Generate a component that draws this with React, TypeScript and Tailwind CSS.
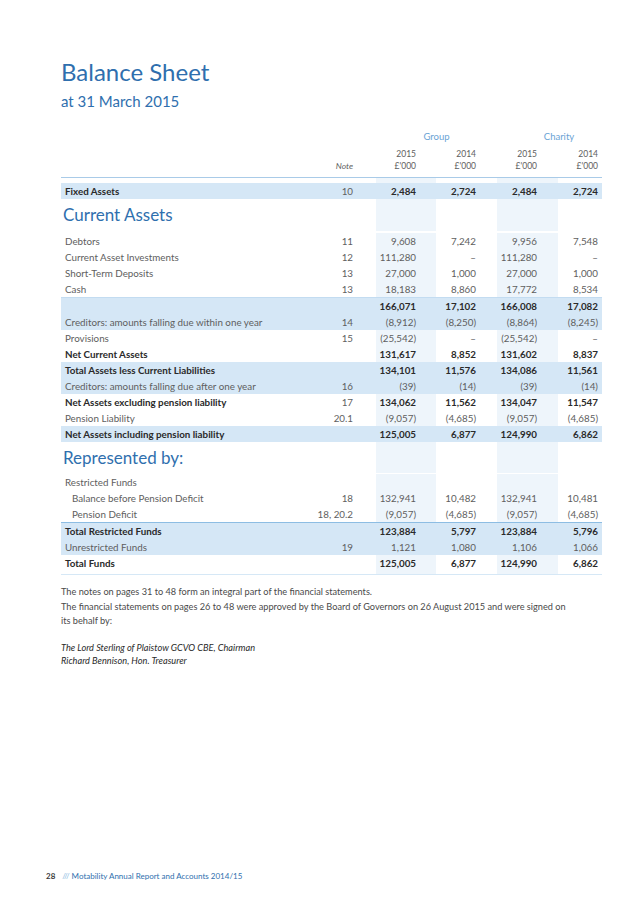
import type { ReactNode } from 'react';

const COLS = 'grid grid-cols-[255px_60px_60px_61px_61px_44px]';

interface RowProps {
  label?: ReactNode;
  note?: string;
  vals?: string[];
  bold?: boolean;
  shaded?: boolean;
  indent?: boolean;
  className?: string;
}

// one line of the statement; col 1 and 3 carry the pale column tint unless the whole row is shaded
function Row({ label, note, vals = ['', '', '', ''], bold, shaded, indent, className = 'h-4 leading-4' }: RowProps) {
  const tint = shaded ? '' : 'bg-[#eef5fb]';
  const val = bold ? 'font-bold text-[#2a2a2a]' : 'text-[#5e5e5e]';
  return (
    <div className={`${COLS} text-[9.8px] ${className} ${shaded ? 'bg-[#d5e7f6]' : ''}`}>
      <div className={`${indent ? 'pl-[11px]' : 'pl-1'} ${val} whitespace-nowrap`}>{label}</div>
      <div className="pr-[23px] text-right text-[#5e5e5e]">{note}</div>
      <div className={`pr-[20px] text-right ${tint} ${val}`}>{vals[0]}</div>
      <div className={`pr-[21px] text-right ${val}`}>{vals[1]}</div>
      <div className={`pr-[21px] text-right ${tint} ${val}`}>{vals[2]}</div>
      <div className={`pr-[4px] text-right ${val}`}>{vals[3]}</div>
    </div>
  );
}

function Heading({ children, className }: { children: ReactNode; className: string }) {
  return (
    <div className={`${COLS} ${className}`}>
      <div className="col-span-2 flex items-center pl-[2px] text-[17px] text-[#2f6fae]">{children}</div>
      <div className="bg-[#eef5fb]" />
      <div />
      <div className="bg-[#eef5fb]" />
      <div />
    </div>
  );
}

function Spacer({ className }: { className: string }) {
  return (
    <div className={`${COLS} ${className}`}>
      <div />
      <div />
      <div className="bg-[#eef5fb]" />
      <div />
      <div className="bg-[#eef5fb]" />
      <div />
    </div>
  );
}

export default function App() {
  return (
    <div className="h-[903px] w-[638px] bg-white font-['Lato','Liberation_Sans',sans-serif] text-[#5e5e5e]">
      <div className="pt-[58px] pl-[61px]">
        <h1 className="text-[24px] leading-[28px] text-[#2f6fae]">Balance Sheet</h1>
        <p className="mt-[5px] text-[15px] leading-[20px] text-[#2f6fae]">at 31 March 2015</p>
      </div>

      <div className="mt-[19px] ml-[61px] w-[541px]">
        {/* column headings */}
        <div className={`${COLS} text-[9.5px] leading-[14px] text-[#6aa3d5]`}>
          <div />
          <div />
          <div className="col-span-2 text-center">Group</div>
          <div className="col-span-2 pl-[19px] text-center">Charity</div>
        </div>
        <div className={`${COLS} mt-[4px] border-b border-[#a9cbe8] pb-[5px] text-[8.5px] leading-[12px] text-[#5e5e5e]`}>
          <div />
          <div className="flex items-end justify-end pr-[23px] italic">Note</div>
          <div className="pr-[20px] text-right">2015<br />£'000</div>
          <div className="pr-[21px] text-right">2014<br />£'000</div>
          <div className="pr-[21px] text-right">2015<br />£'000</div>
          <div className="pr-[4px] text-right">2014<br />£'000</div>
        </div>

        <Spacer className="h-[5px]" />
        <Row label="Fixed Assets" note="10" vals={['2,484', '2,724', '2,484', '2,724']} bold shaded />
        <Heading className="h-[34px] pb-[2px]">Current Assets</Heading>
        <Row label="Debtors" note="11" vals={['9,608', '7,242', '9,956', '7,548']} />
        <Row label="Current Asset Investments" note="12" vals={['111,280', '–', '111,280', '–']} />
        <Row label="Short-Term Deposits" note="13" vals={['27,000', '1,000', '27,000', '1,000']} />
        <Row label="Cash" note="13" vals={['18,183', '8,860', '17,772', '8,534']} />
        <div className="h-px bg-[#c3dcf1]" />
        <Row vals={['166,071', '17,102', '166,008', '17,082']} bold shaded />
        <Row label="Creditors: amounts falling due within one year" note="14" vals={['(8,912)', '(8,250)', '(8,864)', '(8,245)']} shaded />
        <Row label="Provisions" note="15" vals={['(25,542)', '–', '(25,542)', '–']} />
        <Row label="Net Current Assets" vals={['131,617', '8,852', '131,602', '8,837']} bold />
        <Row label="Total Assets less Current Liabilities" vals={['134,101', '11,576', '134,086', '11,561']} bold shaded />
        <Row label="Creditors: amounts falling due after one year" note="16" vals={['(39)', '(14)', '(39)', '(14)']} shaded />
        <Row label="Net Assets excluding pension liability" note="17" vals={['134,062', '11,562', '134,047', '11,547']} bold />
        <Row label="Pension Liability" note="20.1" vals={['(9,057)', '(4,685)', '(9,057)', '(4,685)']} />
        <Row label="Net Assets including pension liability" vals={['125,005', '6,877', '124,990', '6,862']} bold shaded />
        <Heading className="h-[32px] pb-[1px]">Represented by:</Heading>
        <Row label="Restricted Funds" />
        <Row label="Balance before Pension Deficit" note="18" vals={['132,941', '10,482', '132,941', '10,481']} indent />
        <Row label="Pension Deficit" note="18, 20.2" vals={['(9,057)', '(4,685)', '(9,057)', '(4,685)']} indent />
        <div className="h-px bg-[#8dbde3]" />
        <Row label="Total Restricted Funds" vals={['123,884', '5,797', '123,884', '5,796']} bold shaded />
        <Row label="Unrestricted Funds" note="19" vals={['1,121', '1,080', '1,106', '1,066']} shaded />
        <Row label="Total Funds" vals={['125,005', '6,877', '124,990', '6,862']} bold />
        <Spacer className="h-[4px] border-b border-[#d6e8f6]" />
      </div>

      <div className="mt-[9px] pl-[61px] text-[9.2px] text-[#4a4a4a]">
        <p className="leading-[16px]">The notes on pages 31 to 48 form an integral part of the financial statements.</p>
        <p className="leading-[14px]">
          The financial statements on pages 26 to 48 were approved by the Board of Governors on 26 August 2015 and were signed on
          <br />
          its behalf by:
        </p>
        <p className="mt-[13px] italic leading-[13px] text-[#2a2a2a]">
          The Lord Sterling of Plaistow GCVO CBE, Chairman
          <br />
          Richard Bennison, Hon. Treasurer
        </p>
      </div>

      <div className="mt-[203px] flex items-center gap-[7px] pl-[46px] text-[8px] leading-[12px]">
        <span className="font-bold text-[#3a3a3a]">28</span>
        <span className="text-[#2f6fae]">
          <span className="text-[#8ab9e2]">///</span> Motability Annual Report and Accounts 2014/15
        </span>
      </div>
    </div>
  );
}
